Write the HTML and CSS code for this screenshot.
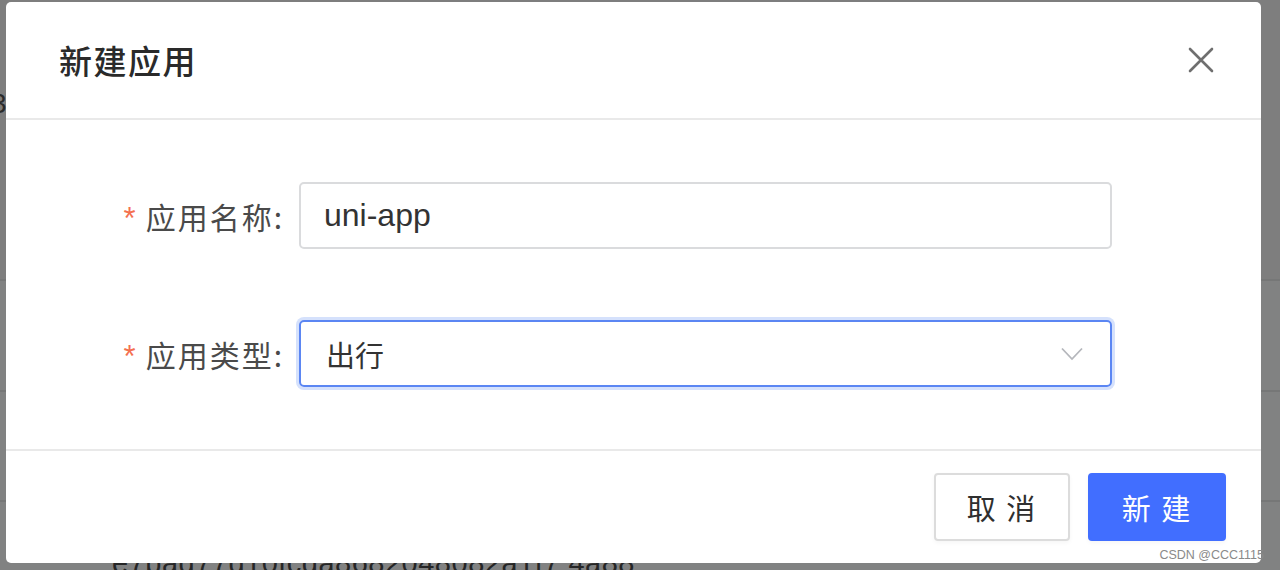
FILE: index.html
```html
<!DOCTYPE html>
<html lang="zh-CN">
<head>
<meta charset="utf-8">
<title>新建应用</title>
<link rel="stylesheet" href="styles.css">
</head>
<body>
<div class="page">
  <div class="page-row row-a"><span class="peek-num">3</span></div>
  <div class="page-row row-b"></div>
  <div class="page-row row-c"></div>
  <div class="page-row row-d"><span class="peek-hash">e7bad77d10fcda8682048082a1f7 4a88</span></div>
</div>

<div class="dialog">
  <div class="dialog-header">
    <h2 class="dialog-title">新建应用</h2>
    <button class="dialog-close" aria-label="关闭">
      <svg width="26" height="26" viewBox="0 0 26 26"><path d="M2 2 L24 24 M24 2 L2 24" stroke="#6f6f6f" stroke-width="2.6" stroke-linecap="round" fill="none"/></svg>
    </button>
  </div>
  <div class="dialog-body">
    <div class="form-item">
      <label class="form-label"><span class="req">*</span>应用名称:</label>
      <div class="input">uni-app</div>
    </div>
    <div class="form-item">
      <label class="form-label"><span class="req">*</span>应用类型:</label>
      <div class="input select">
        <span>出行</span>
        <svg class="chev" width="22" height="14" viewBox="0 0 22 14"><path d="M1 1.5 L11 12 L21 1.5" stroke="#b5b7bc" stroke-width="1.8" fill="none"/></svg>
      </div>
    </div>
  </div>
  <div class="dialog-footer">
    <button class="btn">取 消</button>
    <button class="btn btn-primary">新 建</button>
  </div>
</div>
<div class="watermark">CSDN @CCC1115</div>
</body>
</html>
```

FILE: styles.css
```css
* { box-sizing: border-box; }
html, body { margin: 0; padding: 0; }
body {
  width: 1280px;
  height: 570px;
  overflow: hidden;
  position: relative;
  background: #818282;
  font-family: "Noto Sans CJK SC", "Noto Sans", sans-serif;
}

.page { display: flex; flex-direction: column; }
.page-row { border-bottom: 2px solid #767777; position: relative; }
.row-a { height: 281px; background: #7e7e7e; }
.row-b { height: 111px; }
.row-c { height: 110px; }
.row-d { height: 80px; border-bottom: none; }
.peek-num {
  position: absolute;
  left: -9px;
  top: 88px;
  font-family: "Liberation Sans", sans-serif;
  font-size: 28px;
  color: #2b2b2b;
}
.peek-hash {
  position: absolute;
  left: 112px;
  top: 45px;
  font-family: "Liberation Sans", sans-serif;
  font-size: 29px;
  color: #262626;
  letter-spacing: 0.5px;
  white-space: nowrap;
}

.dialog {
  position: absolute;
  left: 6px;
  top: 2px;
  width: 1255px;
  height: 561px;
  background: #fff;
  border-radius: 5px;
  display: flex;
  flex-direction: column;
}
.dialog-header {
  height: 118px;
  border-bottom: 2px solid #e9e9e9;
  display: flex;
  align-items: center;
  justify-content: space-between;
  padding: 0 47px 0 53px;
}
.dialog-title {
  margin: 0;
  font-size: 33px;
  font-weight: 500;
  color: #2a2a2a;
  letter-spacing: 1.5px;
}
.dialog-close {
  border: none;
  background: none;
  padding: 0;
  display: flex;
  width: 26px;
  height: 26px;
}

.dialog-body {
  height: 329px;
  padding-top: 62px;
  display: flex;
  flex-direction: column;
  gap: 71px;
}
.form-item {
  display: flex;
  align-items: center;
  height: 67px;
}
.form-label {
  width: 293px;
  text-align: right;
  padding-right: 15px;
  font-size: 30px;
  color: #4a4a4a;
  letter-spacing: 2px;
  white-space: nowrap;
}
.req {
  color: #f4704f;
  margin-right: 8px;
  font-family: "Liberation Sans", sans-serif;
  font-size: 31px;
}
.input {
  width: 813px;
  height: 67px;
  border: 2px solid #dadbdd;
  border-radius: 5px;
  padding-left: 23px;
  display: flex;
  align-items: center;
  font-family: "Liberation Sans", "Noto Sans CJK SC", sans-serif;
  font-size: 32px;
  color: #333;
}
.select {
  border-color: #5b86f3;
  box-shadow: 0 0 0 3px #d5e1fc;
  justify-content: space-between;
  padding-right: 27px;
  padding-left: 25px;
  font-family: "Noto Sans CJK SC", sans-serif;
  font-size: 29px;
}
.chev { display: block; }

.dialog-footer {
  flex: 1;
  border-top: 2px solid #e9e9e9;
  display: flex;
  justify-content: flex-end;
  align-items: flex-start;
  padding: 22px 35px 0 0;
  gap: 18px;
}
.btn {
  width: 136px;
  height: 68px;
  border: 2px solid #dcdcdc;
  border-radius: 4px;
  background: #fff;
  font-family: "Noto Sans CJK SC", sans-serif;
  font-size: 29px;
  color: #2f2f2f;
  letter-spacing: 2px;
  padding: 0;
  box-shadow: 0 2px 4px rgba(0,0,0,0.04);
}
.btn-primary {
  width: 138px;
  background: #416eff;
  border-color: #416eff;
  color: #fff;
}

.watermark {
  position: absolute;
  right: 16px;
  top: 548px;
  font-family: "Liberation Sans", sans-serif;
  font-size: 12.5px;
  color: #8a8a8a;
  white-space: nowrap;
}
```
